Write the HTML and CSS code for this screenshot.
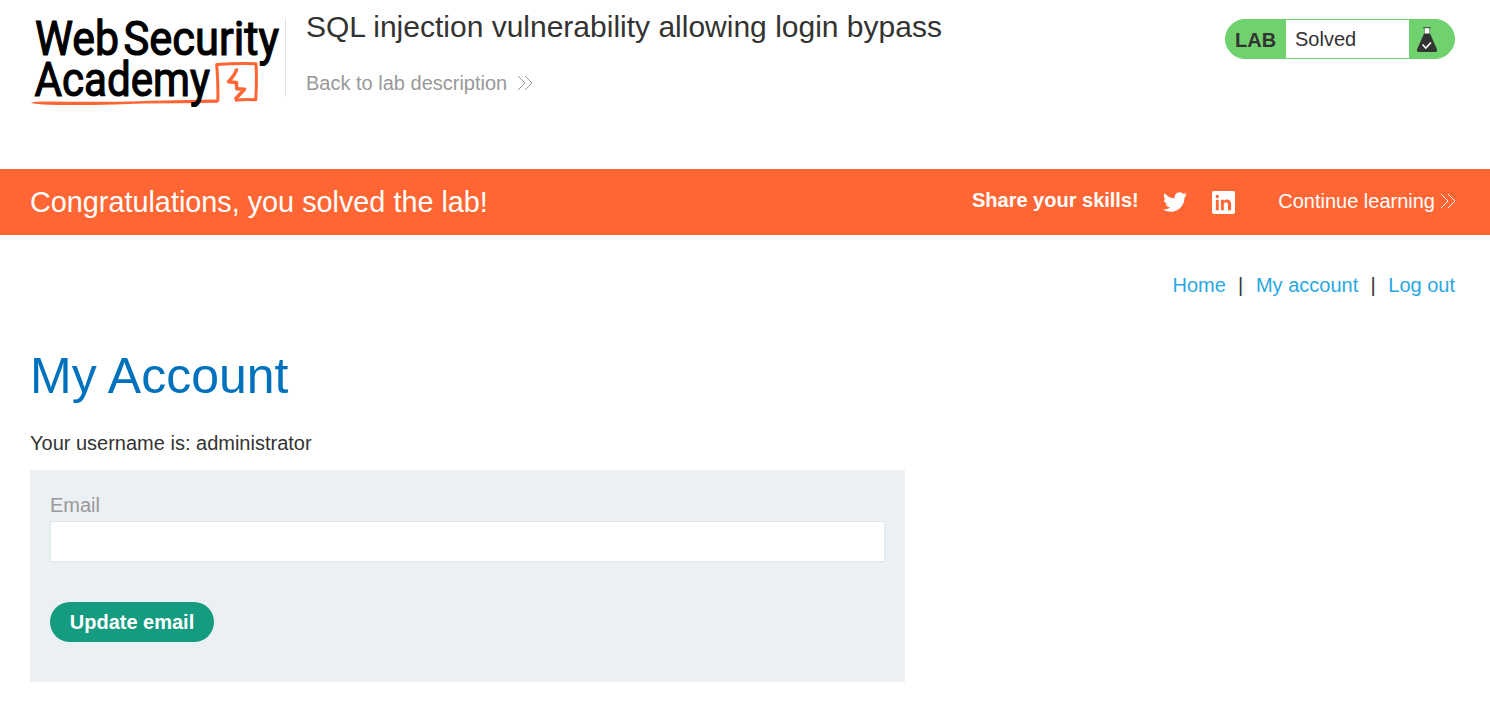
FILE: index.html
```html
<!DOCTYPE html>
<html lang="en">
<head>
<meta charset="utf-8">
<title>SQL injection vulnerability allowing login bypass</title>
<link rel="stylesheet" href="styles.css">
</head>
<body>
<header class="lab-header">
  <svg class="logo" viewBox="0 0 255 95" role="img" aria-label="Web Security Academy">
    <path class="logo-underline" d="M.5 87.800Q4 86.200 20 86.400Q70 87.400 110 86.200T168 84.800L188 84.600V87.800L150 88.200Q110 88.300 85 89.400Q40 90.500 12 89.400Q4 89 .5 87.800z"/>
    <path class="logo-line" d="M187.800 86.500Q188.300 68 186.700 49.600Q206 48 226 48.700Q227 66 225.700 84.800Q216 83.800 205 85.200"/>
    <path class="logo-bolt" d="M206.700 53.500Q206.500 58 198.500 66.800L206.500 67.500L206.700 73.800L214.500 74.200L205 84.500"/>
    <g class="logo-text">
      <text x="5" y="40" textLength="84" lengthAdjust="spacingAndGlyphs">Web</text>
      <text x="93.500" y="40" textLength="155.500" lengthAdjust="spacingAndGlyphs">Security</text>
      <text x="4.500" y="81" textLength="175.500" lengthAdjust="spacingAndGlyphs">Academy</text>
    </g>
  </svg>
  <div class="title-block">
    <h2>SQL injection vulnerability allowing login bypass</h2>
    <a class="back">Back to lab description<svg class="chev" viewBox="0 0 16 16"><path d="M1 1l7 7-7 7M8 1l7 7-7 7"/></svg></a>
  </div>
  <div class="lab-status">
    <span class="lab-tag">LAB</span>
    <span class="lab-state">Solved</span>
    <svg class="flask" viewBox="0 0 20 26"><path fill="#fff" d="M7.500 1h5v6h-5z"/><path fill="#333332" fill-opacity=".7" d="M6 0h8v1.300h-1.200V6.500h-.6V1.300H7.800V6.500h-.6V1.300H6z"/><path fill="#333332" d="M7 6.500h6L20 22.500Q20.500 25 18 25H2Q-.5 25 0 22.500z"/><path fill="none" stroke="#fff" stroke-width="1.600" d="M5.500 17.500l3.300 3.500 5.200-5.500"/></svg>
  </div>
</header>
<section class="banner">
  <h4>Congratulations, you solved the lab!</h4>
  <div class="banner-links">
    <strong>Share your skills!</strong>
    <svg class="twitter" viewBox="0 0 24 24"><path d="M23.950 4.570a10 10 0 0 1-2.820.770 4.960 4.960 0 0 0 2.160-2.720c-.950.550-2 .950-3.130 1.180a4.920 4.920 0 0 0-8.380 4.480A13.900 13.900 0 0 1 1.640 3.160a4.920 4.920 0 0 0 1.520 6.570 4.900 4.900 0 0 1-2.230-.610v.060a4.920 4.920 0 0 0 3.950 4.830 5 5 0 0 1-2.210.080 4.940 4.940 0 0 0 4.600 3.420A9.870 9.870 0 0 1 0 19.540a14 14 0 0 0 7.550 2.210c9.050 0 14-7.500 14-13.980l-.020-.630a9.900 9.900 0 0 0 2.420-2.570z"/></svg>
    <svg class="linkedin" viewBox="0 0 24 24"><path fill-rule="evenodd" d="M2 0h20Q24 0 24 2v20q0 2-2 2H2Q0 24 0 22V2Q0 0 2 0zM4 9.200v10.900h3V9.200zM5.500 3.900a1.800 1.800 0 1 0 0 3.600 1.800 1.800 0 0 0 0-3.600zM9.300 9.200v10.900h3v-5.700c0-3.800 4.400-3.500 4.400 0v5.700h3.200v-6.500c0-5.400-5.500-6-7.600-3V9.200z"/></svg>
    <a class="continue">Continue learning<svg class="chev" viewBox="0 0 16 16"><path d="M1 1l7 7-7 7M8 1l7 7-7 7"/></svg></a>
  </div>
</section>
<main class="page">
  <nav class="top-links"><a>Home</a><span>|</span><a>My account</a><span>|</span><a>Log out</a></nav>
  <h1>My Account</h1>
  <p class="username">Your username is: administrator</p>
  <form class="login-form">
    <label for="email">Email</label>
    <input id="email" type="email">
    <button type="button">Update email</button>
  </form>
</main>
</body>
</html>
```
FILE: styles.css
```css
* { box-sizing: border-box; }
body { margin: 0; background: #fff; color: #333332; font: 20px/30px "Liberation Sans", Arial, sans-serif; overflow: hidden; }
h1, h2, h4, p { margin: 0; font-weight: 400; }
.lab-header { display: flex; align-items: flex-start; height: 169px; padding: 0 35px 0 30px; }
.logo { width: 255px; height: 95px; margin-top: 15px; flex: none; overflow: visible; }
.logo-text { font: 400 47.500px Roboto, sans-serif; fill: #000; stroke: #000; stroke-width: 1.200px; }
.logo-underline { fill: #ff6633; }
.logo-line, .logo-bolt { fill: none; stroke: #ff6633; stroke-width: 3; stroke-linejoin: round; }
.logo-bolt { stroke-width: 3.500; }
.title-block { height: 79px; margin-top: 18px; padding-left: 20px; border-left: 1px solid #e4e4e4; flex: 1; }
.title-block h2 { font-size: 30px; line-height: 36px; margin-top: -9px; }
.back { display: flex; align-items: center; gap: 10px; color: #999; margin-top: 23px; }
.chev { width: 16px; height: 16px; fill: none; stroke: currentColor; stroke-width: 1; }
.lab-status { display: flex; width: 230px; height: 40px; margin-top: 19px; border: 1px solid #70d26e; border-radius: 20px; background: #70d26e; overflow: hidden; line-height: 38px; }
.lab-tag { width: 60px; padding-left: 9px; font-weight: 700; font-size: 20px; line-height: 40px; }
.lab-state { width: 123px; padding-left: 9px; background: #fff; }
.flask { width: 20px; height: 26px; margin: 7px 0 0 8px; }
.banner { display: flex; justify-content: space-between; height: 66px; padding: 0 34px 0 30px; background: #ff6633; color: #fff; line-height: 64px; }
.banner h4 { font-size: 28.800px; line-height: 66px; }
.banner-links { display: flex; align-items: center; height: 64px; }
.banner-links strong { line-height: 62px; margin-top: -2px; }
.twitter { width: 24px; height: 24px; fill: #fff; margin: 2px 25px 0 24px; }
.linkedin { width: 23px; height: 23px; fill: #fff; margin: 2px 43.500px 0 0; }
.continue { display: flex; align-items: center; gap: 5px; }
.page { padding: 35px 35px 0 30px; }
.top-links { display: flex; justify-content: flex-end; color: #333332; }
.top-links a { color: #29a7e1; }
.top-links span { margin: 0 12.700px 0 12.200px; }
.page h1 { margin-top: 46px; color: #0071bc; font-size: 50px; line-height: 60px; }
.username { margin-top: 22px; }
.login-form { width: 875px; height: 212px; margin-top: 12px; padding: 20px; background: #eaf0f3; }
.login-form label { display: block; height: 31px; color: #999; }
.login-form input { display: block; width: 100%; height: 41px; border: 1px solid #e1e6e6; background: #fff; padding: 0 10px; font: inherit; }
.login-form button { display: block; width: 164px; height: 40px; margin-top: 40px; padding: 0; border: 0; border-radius: 20px; background: #159b7f; color: #fff; font: 700 20px/40px "Liberation Sans", Arial, sans-serif; }
```
